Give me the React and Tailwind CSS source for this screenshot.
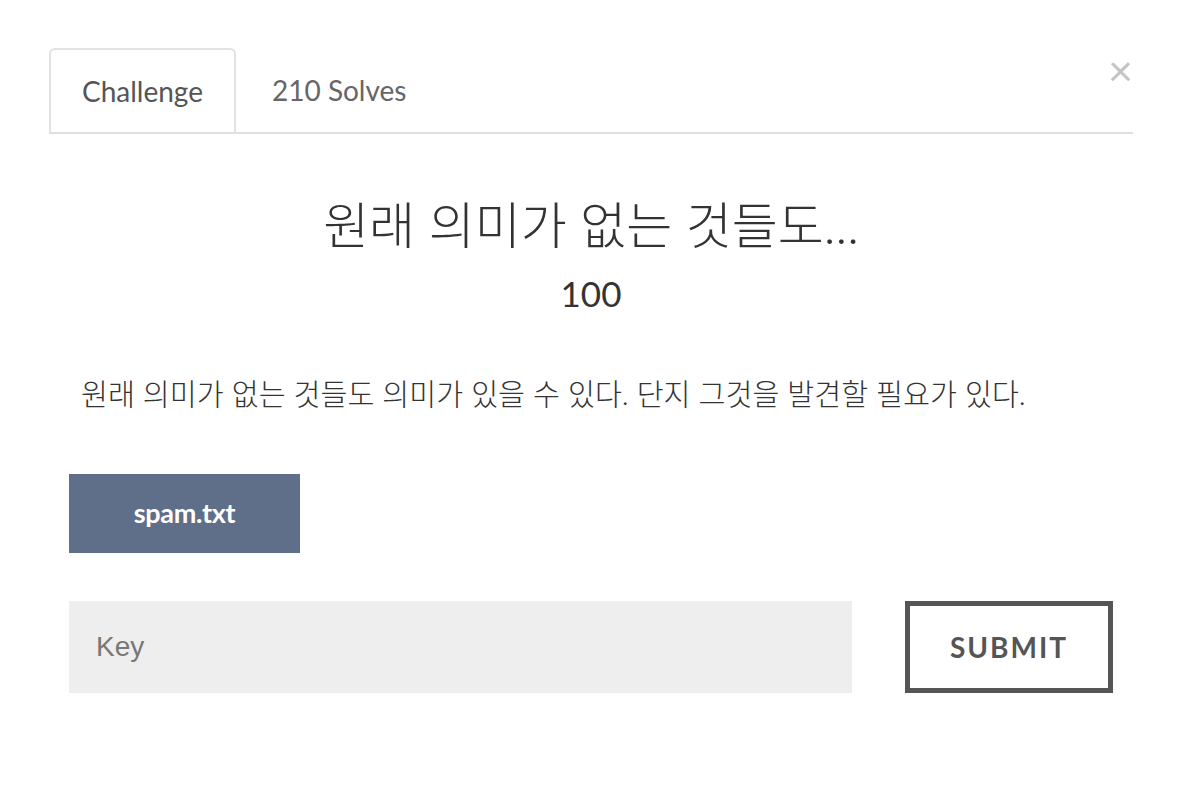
import { useState } from 'react'

const lato = { fontFamily: 'Lato, "Noto Sans CJK KR", sans-serif' }

export default function App() {
  const [tab, setTab] = useState('challenge')
  const [key, setKey] = useState('')

  return (
    <div className="min-h-screen w-full bg-white text-[#333]" style={lato}>
      <div className="relative px-[49px] pt-[48px]">
        {/* Close */}
        <button className="absolute right-[49px] top-[48px] text-[43px] leading-none text-[#c4c4c4]">
          ×
        </button>

        {/* Tabs */}
        <div className="flex border-b-2 border-[#dedede]">
          <button
            onClick={() => setTab('challenge')}
            className="-mb-[2px] h-[84px] px-[31px] rounded-t-md border-2 border-b-0 border-[#e2e2e2] bg-white text-[28px] text-[#555]"
          >
            Challenge
          </button>
          <button
            onClick={() => setTab('solves')}
            className="h-[84px] px-[36px] text-[28px] text-[#666]"
          >
            210 Solves
          </button>
        </div>

        {/* Body */}
        <div className="px-[20px]">
          <h2 className="mt-[58px] text-center text-[50px] font-light leading-[66px] text-[#333]">원래 의미가 없는 것들도...</h2>
          <h3 className="mt-[11px] text-center text-[35px] leading-[48px] text-[#333]">100</h3>

          <p className="mt-[59px] px-[12px] text-[29.3px] font-light leading-[36px] text-[#333]">
            원래 의미가 없는 것들도 의미가 있을 수 있다. 단지 그것을 발견할 필요가 있다.
          </p>

          <div className="mt-[62px]">
            <button className="h-[79px] w-[231px] bg-[#5f6f8a] text-[27px] font-bold text-white tracking-[-0.3px]">
              spam.txt
            </button>
          </div>

          <div className="mt-[48px] flex items-stretch justify-between">
            <input
              value={key}
              onChange={e => setKey(e.target.value)}
              placeholder="Key"
              className="h-[92px] w-[783px] bg-[#eeeeee] px-[27px] text-[28px] text-[#555] placeholder:text-[#777] outline-none"
              style={{ fontFamily: '"Liberation Sans", Arial, sans-serif' }}
            />
            <button className="h-[92px] w-[208px] border-[5px] border-[#555] bg-white text-[28px] font-bold tracking-[2px] text-[#555]">
              SUBMIT
            </button>
          </div>
        </div>
      </div>
    </div>
  )
}
